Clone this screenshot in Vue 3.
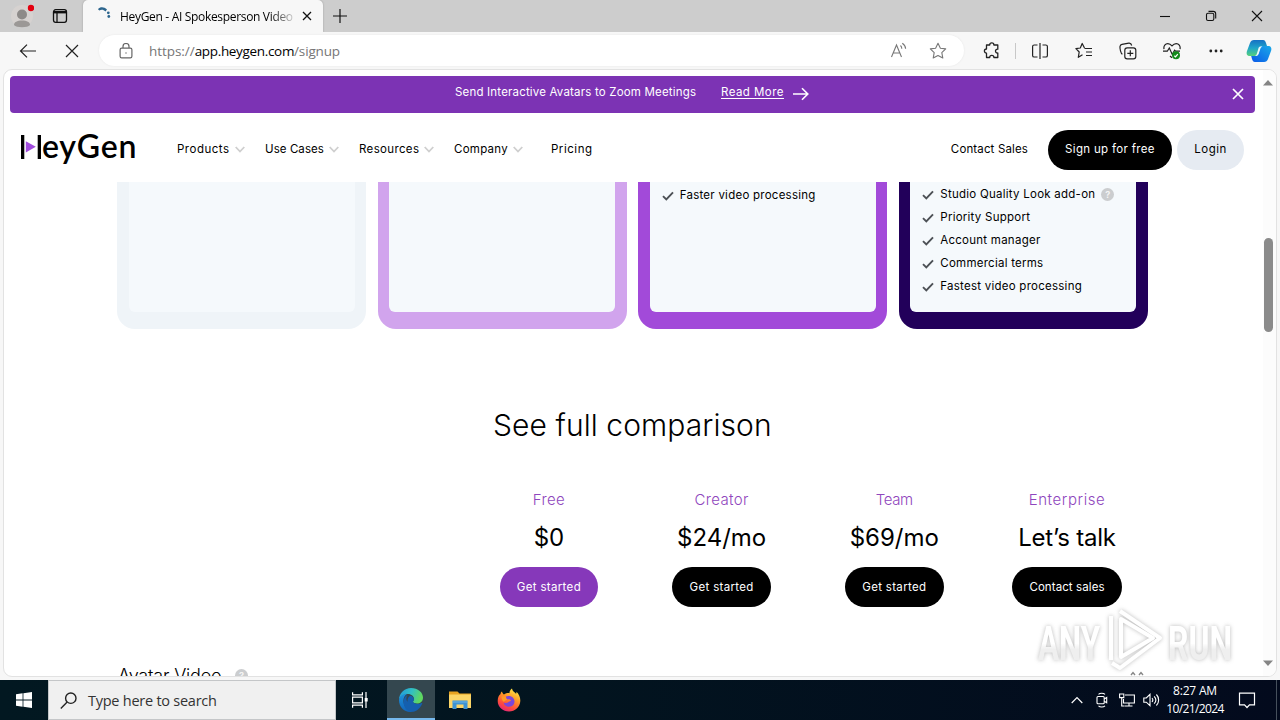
<script setup>
const navLinks = [
  { name: 'Products', spacing: '0.5px', width: 88 },
  { name: 'Use Cases', spacing: '0.08px', width: 94 },
  { name: 'Resources', spacing: '0.35px', width: 95 },
  { name: 'Company', spacing: '0.26px', width: 97 }
]

const cards = [
  { id: 'free', features: [] },
  { id: 'creator', features: [] },
  { id: 'team', features: [{ text: 'Faster video processing' }] },
  {
    id: 'enterprise',
    features: [
      { text: 'Studio Quality Look add-on', hint: true },
      { text: 'Priority Support' },
      { text: 'Account manager' },
      { text: 'Commercial terms' },
      { text: 'Fastest video processing' }
    ]
  }
]

const plans = [
  { name: 'Free', price: '$0', action: 'Get started', spacing: '0.39px', primary: true },
  { name: 'Creator', price: '$24/mo', action: 'Get started', spacing: '0.37px' },
  { name: 'Team', price: '$69/mo', action: 'Get started', spacing: '-0.4px' },
  { name: 'Enterprise', price: 'Let’s talk', action: 'Contact sales', spacing: '0.57px', wide: true }
]
</script>

<template>
  <div class="screen">
    <div class="tab-bar">
      <div class="profile">
        <svg width="24" height="26" viewBox="0 0 24 26">
          <circle cx="12" cy="14" r="11" fill="#d6d2d0" />
          <circle cx="12" cy="12.500" r="5" fill="#8d8a88" />
          <path d="M4 23c0-3 3-4.500 8-4.500s8 1.500 8 4.500c-2 3-14 3-16 0z" fill="#9b9896" />
          <circle cx="21" cy="6" r="3.200" fill="#e3000f" />
        </svg>
      </div>
      <svg class="tab-actions" width="16" height="16" viewBox="0 0 16 16" fill="none" stroke="#111" stroke-width="1.300">
        <rect x="1.500" y="1.700" width="13" height="12.600" rx="2.200" />
        <path d="M1.500 4.200h13" stroke-width="2.400" />
        <path d="M5 4v10" />
      </svg>
      <div class="tab">
        <svg width="14" height="16" viewBox="0 0 14 16" fill="#2d668e">
          <path d="M1 3.200C3 .800 7 .600 10 3.600L8.500 5.400C6.300 3.300 4.200 3.200 2.300 4.600z" />
          <circle cx="11.300" cy="6.800" r="1.400" />
          <circle cx="11.800" cy="10.500" r="1.400" />
        </svg>
        <span class="tab-title">HeyGen - AI Spokesperson Video</span>
        <svg width="10" height="10" viewBox="0 0 10 10" stroke="#111" stroke-width="1.300"><path d="M1 1l8 8M9 1L1 9" /></svg>
      </div>
      <svg class="new-tab" width="14" height="14" viewBox="0 0 14 14" stroke="#111" stroke-width="1.200"><path d="M7 0v14M0 7h14" /></svg>
      <div class="window-buttons">
        <svg width="12" height="12" viewBox="0 0 12 12" stroke="#111" stroke-width="1.100"><path d="M1 6.500h10" /></svg>
        <svg width="12" height="12" viewBox="0 0 12 12" fill="none" stroke="#111" stroke-width="1.100">
          <rect x="1.500" y="3.200" width="7.300" height="7.300" rx="1.500" />
          <path d="M3.500 1.400h4.700c1.500 0 2.500 1 2.500 2.500v4.600" />
        </svg>
        <svg width="12" height="12" viewBox="0 0 12 12" stroke="#111" stroke-width="1.100"><path d="M1 1l10 10M11 1L1 11" /></svg>
      </div>
    </div>

    <div class="toolbar">
      <svg class="back" width="18" height="14" viewBox="0 0 18 14" fill="none" stroke="#222" stroke-width="1.200"><path d="M17 7H1.500M8 .600L1.500 7 8 13.400" /></svg>
      <svg class="stop" width="14" height="14" viewBox="0 0 14 14" stroke="#222" stroke-width="1.200"><path d="M1 1l12 12M13 1L1 13" /></svg>
      <div class="address">
        <svg width="14" height="16" viewBox="0 0 14 16" fill="none" stroke="#666" stroke-width="1.200">
          <rect x="1.100" y="5.200" width="11.800" height="9.600" rx="1.600" />
          <path d="M4 5V3.500a3 3 0 0 1 6 0V5" />
          <circle cx="7" cy="10" r=".700" fill="#666" stroke="none" />
        </svg>
        <div class="url"><span class="scheme">https://</span><span class="host">app.heygen.com</span><span class="path">/signup</span></div>
        <svg class="read" width="18" height="18" viewBox="0 0 18 18" fill="none" stroke="#777" stroke-width="1.100">
          <path d="M1.500 15L6.500 3l5 12M3.300 11h6.500M10.500 3.500c1 1 1.300 2 1.300 3.300M12.300 1.300c1.900 1.300 3.300 3 3.300 5.500" />
        </svg>
        <svg class="star" width="18" height="18" viewBox="0 0 18 18" fill="none" stroke="#777" stroke-width="1.100" stroke-linejoin="round">
          <path d="M9 1.300l2.400 4.900 5.300.700-3.900 3.800 1 5.300L9 13.500 4.200 16l1-5.300L1.300 6.900l5.300-.700z" />
        </svg>
      </div>
      <div class="tools">
        <svg class="ext" width="18" height="18" viewBox="0 0 18 18" fill="none" stroke="#222" stroke-width="1.300" stroke-linejoin="round">
          <path d="M3.500 3h3.200a2.100 2.100 0 0 1 4.200 0h3.900v4.200c-3.100-.400-3.100 4.200 0 3.800V15.500h-3.900a2.100 2.100 0 0 0-4.200 0H3.500v-4.300a2.100 2.100 0 0 1 0-4.200z" />
        </svg>
        <span class="divider"></span>
        <svg width="18" height="18" viewBox="0 0 18 18" fill="none" stroke="#222" stroke-width="1.200">
          <path d="M6.500 3H3.200C2.200 3 1.600 3.600 1.600 4.600v8.800c0 1 .600 1.600 1.600 1.600h3.300M11.500 3h3.300c1 0 1.600.600 1.600 1.600v8.800c0 1-.600 1.600-1.600 1.600h-3.300M9 1v16" />
        </svg>
        <svg width="18" height="18" viewBox="0 0 18 18" fill="none" stroke="#222" stroke-width="1.200" stroke-linejoin="round">
          <path d="M9.500 6L7.200 1.500 5.300 6l-4.400.700 3.300 3.300-.900 5.300 4.200-2.500M9.500 6.500h7.500M11 10h6M11 13.500h6" />
        </svg>
        <svg width="18" height="18" viewBox="0 0 18 18" fill="none" stroke="#222" stroke-width="1.200">
          <rect x="5.800" y="5.800" width="11" height="11" rx="2.400" />
          <path d="M11.300 8.300v6M8.300 11.300h6M3.400 12.300C1.800 11.400.700 6.500 1 4.300 1.300 3 2 2.600 3 2.400l6.800-1.200c1.500-.200 2.500.600 2.900 2.300" />
        </svg>
        <svg width="18" height="18" viewBox="1 0 18 18" fill="none" stroke="#222" stroke-width="1.200">
          <path d="M10 15.800L8 14M2 7.200C1.300 3.500 3.500 1.600 5.800 1.600c2 0 3.100 1 4.200 2.300 1.100-1.300 2.200-2.300 4.200-2.300 2.500 0 4.500 2 3.800 5.600M1 9.200h4.300L7.300 6l3 6.500 2.300-4.300 1 1H18" />
          <circle cx="14" cy="13.300" r="4" fill="#138a1b" stroke="none" />
          <path d="M12.300 13.800l1.200 1 2.300-2.600" stroke="#fff" />
        </svg>
        <svg width="18" height="18" viewBox="0 0 18 18" fill="#222"><circle cx="3.800" cy="9" r="1.400" /><circle cx="9" cy="9" r="1.400" /><circle cx="14.200" cy="9" r="1.400" /></svg>
        <svg class="copilot" width="26" height="24" viewBox="0 0 26 24">
          <defs>
            <linearGradient id="cpA" x1="0" y1="0" x2="0" y2="1"><stop offset="0" stop-color="#1670c4" /><stop offset=".5" stop-color="#1fa5c9" /><stop offset="1" stop-color="#56d17c" /></linearGradient>
            <linearGradient id="cpB" x1="1" y1="0" x2="0" y2="1"><stop offset="0" stop-color="#1aa9e8" /><stop offset="1" stop-color="#0a59e8" /></linearGradient>
          </defs>
          <path d="M8 1h9c2 0 2.500 1.500 3 3l1 3h-4c-2 0-3 1-3.500 3l-1.500 5c-.500 1.500-1.500 2-3 2H4c-3 0-4-2-3-5L4 4c.700-2 2-3 4-3z" fill="url(#cpA)" />
          <path d="M18 23H9c-2 0-2.500-1.500-3-3l-.800-3H9c2 0 3-1 3.500-3L14 9c.500-1.500 1.500-2 3-2h5c3 0 4 2 3 5l-3 8c-.700 2-2 3-4 3z" fill="url(#cpB)" />
          <path d="M14 7.500h2.500c-1.300.500-1.700 1-2.200 2.500l-1.500 4.500c-.500 1.500-1.200 2.200-3 2.500H9c1-.500 1.600-1.300 2-2.800l1.200-4c.300-1.500.700-2.300 1.800-2.700z" fill="#e9f6fb" />
        </svg>
      </div>
    </div>

    <div class="viewport">
      <div class="page">
        <div class="banner">
          <span class="banner-text">Send Interactive Avatars to Zoom Meetings</span>
          <a class="banner-link">Read More</a>
          <svg class="banner-arrow" width="16" height="14" viewBox="0 0 16 14" fill="none" stroke="#fff" stroke-width="1.600"><path d="M0 7h14.500M9 1.200L14.800 7 9 12.800" /></svg>
          <svg class="banner-close" width="12" height="12" viewBox="0 0 12 12" stroke="#fff" stroke-width="1.700"><path d="M1 1l10 10M11 1L1 11" /></svg>
        </div>

        <header class="nav">
          <div class="logo">
            <svg width="20" height="24" viewBox="0 0 20 24">
              <path d="M0 0h3.300v24H0zM16.700 0H20v24h-3.300z" fill="#000" />
              <path d="M4.800 6.300l10 5.500-10 5.700z" fill="#a04bdc" />
            </svg>
            <span>eyGen</span>
          </div>
          <nav class="links">
            <a v-for="link in navLinks" :key="link.name" :style="{ width: link.width + 'px', letterSpacing: link.spacing }">
              {{ link.name }}
              <svg width="10" height="7" viewBox="0 0 10 7" fill="none" stroke="#cfcfcf" stroke-width="1.800"><path d="M.700 1L5 5.500 9.300 1" /></svg>
            </a>
            <a class="pricing">Pricing</a>
          </nav>
          <a class="contact">Contact Sales</a>
          <button class="btn signup">Sign up for free</button>
          <button class="btn login">Login</button>
        </header>

        <section class="cards">
          <div v-for="card in cards" :key="card.id" class="card" :class="card.id">
            <ul class="card-body">
              <li v-for="item in card.features" :key="item.text">
                <svg width="12" height="10" viewBox="0 0 12 10" fill="none" stroke="#4d5156" stroke-width="1.900"><path d="M1 5.200l3.300 3.300L11 1.300" /></svg>
                <span>{{ item.text }}</span>
                <i v-if="item.hint" class="hint">?</i>
              </li>
            </ul>
          </div>
        </section>

        <h2 class="title">See full comparison</h2>

        <section class="plans">
          <div v-for="plan in plans" :key="plan.name" class="plan">
            <div class="plan-name" :style="{ letterSpacing: plan.spacing }">{{ plan.name }}</div>
            <div class="plan-price" :class="{ talk: plan.wide }">{{ plan.price }}</div>
            <button class="btn plan-btn" :class="{ primary: plan.primary, wide: plan.wide }">{{ plan.action }}</button>
          </div>
        </section>

        <div class="group">
          <span>Avatar Video</span>
          <i class="hint">?</i>
          <svg width="14" height="10" viewBox="0 0 14 10" fill="none" stroke="#888" stroke-width="1.400"><path d="M1 5l2-2.500L5 5M9 5l2-2.500L13 5" /></svg>
        </div>
      </div>

      <div class="scrollbar">
        <svg width="10" height="6" viewBox="0 0 10 6" fill="#858585"><path d="M0 5.500L5 0l5 5.500z" /></svg>
        <div class="thumb"></div>
        <svg width="10" height="6" viewBox="0 0 10 6" fill="#858585"><path d="M0 .500h10L5 6z" /></svg>
      </div>
    </div>

    <div class="taskbar">
      <div class="start">
        <svg width="16" height="16" viewBox="0 0 16 16" fill="#fff"><path d="M0 2.200l6.600-.900v6.300H0zM7.400 1.200L16 0v7.600H7.400zM0 8.400h6.600v6.300L0 13.800zM7.400 8.400H16V16l-8.600-1.200z" /></svg>
      </div>
      <div class="search">
        <svg width="17" height="17" viewBox="0 0 17 17" fill="none" stroke="#222" stroke-width="1.400"><circle cx="10.800" cy="6.200" r="5.200" /><path d="M7.200 10L.800 16.400" /></svg>
        <span>Type here to search</span>
      </div>
      <div class="task">
        <svg width="18" height="18" viewBox="0 0 18 18" fill="none" stroke="#fff" stroke-width="1.200">
          <path d="M1.600 1.200v2.600h9.800V1.200M1.600 16.800v-2.600h9.800v2.600M1.600 6.200h9.800v5.600H1.600zM15 1v16" />
          <path d="M13.700 7h3v3.500h-3z" fill="#fff" stroke="none" />
        </svg>
      </div>
      <div class="task active">
        <svg width="24" height="24" viewBox="0 0 24 24">
          <defs>
            <linearGradient id="edA" x1="0" y1="0" x2="1" y2=".3"><stop offset="0" stop-color="#2196d9" /><stop offset=".55" stop-color="#31bfc4" /><stop offset="1" stop-color="#5fd860" /></linearGradient>
            <linearGradient id="edB" x1="0" y1="0" x2="0" y2="1"><stop offset="0" stop-color="#1d92dc" /><stop offset="1" stop-color="#1263b8" /></linearGradient>
          </defs>
          <path d="M0 12C0 5 5.500 0 12 0c7 0 12 4.500 12 9.500 0 4-3 6-6 6-2.700 0-4-.900-4-1.700 0-.700 1.100-1 1.100-2.800C15 8.500 12.500 6 9 6c-4.500 0-8 2.500-9 6z" fill="url(#edA)" />
          <path d="M0 12c.500-4 4-6.500 8.500-6.300-3 1.300-4.500 4.600-4 8.300.700 5 4.800 8.500 9.500 9.700-8 1.500-14-4-14-11.700z" fill="url(#edB)" />
          <path d="M8.500 14c-.300-3 .800-5.500 3-6.300 2.200.500 3.400 2 3.500 3.500-.200 1.500-1 1.800-1 2.600 0 1.500 5 3.500 8.500 1.300.700-.400 1 .100.600.800-2 4.200-6 8.200-11 7.800C7.500 23 4.500 19 4.500 14c0-3 1.500-6 4-7-1.700 2.500-1.500 5 0 7z" fill="#155fae" />
        </svg>
      </div>
      <div class="task">
        <svg width="22" height="20" viewBox="0 0 22 20">
          <path d="M0 1.500h8.500l2 2H22V8H0z" fill="#e7a321" />
          <path d="M0 4.500h22V18H0z" fill="#fbd567" />
          <path d="M3.500 19v-8.500h15V19h-4v-4.500h-7V19z" fill="#3c93d3" />
          <path d="M3.500 12h15" stroke="#6fb6e6" />
        </svg>
      </div>
      <div class="task">
        <svg width="24" height="24" viewBox="0 0 24 24">
          <defs>
            <linearGradient id="ffA" x1=".8" y1="0" x2=".3" y2="1"><stop offset="0" stop-color="#fff04a" /><stop offset=".4" stop-color="#ff9a26" /><stop offset=".75" stop-color="#ff4b3c" /><stop offset="1" stop-color="#e3257a" /></linearGradient>
          </defs>
          <path d="M5 3.500c.300 1.500 1 2.300 2 3C9 5 11.500 5 12.500 5.200 12.300 3.500 13.500 1.500 15 .500c.300 2.500 2.500 3.500 4 5.200.500-.500.500-1.200.400-2C22 6 23.500 9.500 23.300 13 23 19 18 23.500 12 23.500S.700 19 .700 13C.700 9.500 2 7 3.600 6 3.600 5 4 4 5 3.500z" fill="url(#ffA)" />
          <path d="M9 8.500c3-1.500 8.500 0 8.500 5 0 3.500-2.800 5.200-5.500 5.200-3.200 0-5.200-2.200-5.400-4.500 1.500 1.300 3.600 1 5.200-.400.800-.700 1.500-.800 2.200-1.100-.500-1.400-2.200-1.600-3.700-1.400-1-.400-1.400-1.500-1.300-2.800z" fill="#7c46d8" />
          <path d="M4.500 8.500C6 8 8 8.300 9 8.700c-.200 1.500.600 2.400 1.400 2.800-1.500.800-2.500 1-3.400 2.500C5.300 12.700 4.500 11 4.500 8.500z" fill="#ff9a26" />
        </svg>
      </div>
      <div class="tray">
        <svg width="12" height="8" viewBox="0 0 12 8" fill="none" stroke="#fff" stroke-width="1.200"><path d="M.700 7L6 1.700 11.300 7" /></svg>
        <svg class="cam" width="14" height="16" viewBox="0 0 14 16" fill="none" stroke="#fff" stroke-width="1.100">
          <rect x="2" y="4.500" width="7.200" height="7.200" rx="1" />
          <path d="M9.200 7l2.500-1.500v5.300L9.200 9.300M3.500 2.300C5 .800 8.500.800 10 2.300M3.500 13.900c1.500 1.500 5 1.500 6.500 0" />
        </svg>
        <svg width="16" height="14" viewBox="0 0 16 14" fill="none" stroke="#fff" stroke-width="1.100">
          <path d="M6 2h9.400v8H4.500V6M10 10v3M6 13h7.500M.600 1h4.200v3.600H.600zM2.700 4.600V13h3" />
        </svg>
        <svg class="sound" width="17" height="14" viewBox="0 0 17 14" fill="none" stroke="#fff" stroke-width="1.100">
          <path d="M.800 5v4.200h2.500L7 12.700V1.300L3.300 5zM9 5c1 1.200 1 2.800 0 4M11.200 3.300c2 2.200 2 5.200 0 7.400M13.400 1.500c3 3.200 3 7.800 0 11" />
        </svg>
        <div class="clock">
          <span class="time">8:27 AM</span>
          <span class="date">10/21/2024</span>
        </div>
        <svg class="notice" width="18" height="17" viewBox="0 0 18 17" fill="none" stroke="#fff" stroke-width="1.200"><path d="M1.500 1.200h15v11.600h-5L9 15.500l-2.500-2.700h-5z" /></svg>
      </div>
    </div>

    <svg class="watermark" width="210" height="74" viewBox="0 0 210 74">
      <defs>
        <linearGradient id="wm" x1="0" y1="0" x2="0" y2="1"><stop offset=".5" stop-color="#fff" /><stop offset=".6" stop-color="#ececec" /></linearGradient>
      </defs>
      <g fill="url(#wm)">
        <text x="6" y="55" textLength="62" lengthAdjust="spacingAndGlyphs">ANY</text>
        <text x="136" y="55" textLength="64" lengthAdjust="spacingAndGlyphs">RUN</text>
      </g>
      <g fill="none" stroke="#fff" stroke-width="4" stroke-linejoin="round">
        <path d="M79 11v44M89 14v38l32-19z" />
        <path d="M88 6l40 27-40 30-8-5" />
      </g>
    </svg>
  </div>
</template>

<style>
body {
  margin: 0;
  overflow: hidden;
}
</style>

<style scoped>
.screen {
  position: relative;
  display: flex;
  flex-direction: column;
  width: 1280px;
  height: 720px;
  overflow: hidden;
  background: #f7f7f7;
  color: #000;
  font-family: Inter, "Liberation Sans", sans-serif;
  font-size: 11.5px;
}

svg {
  display: block;
  flex: none;
}

/* browser chrome */
.tab-bar {
  display: flex;
  align-items: center;
  height: 32px;
  flex: none;
  background: #cdcdcd;
  font-family: "Open Sans", sans-serif;
  font-size: 12px;
}

.profile {
  margin-left: 10px;
  padding-bottom: 2px;
}

.tab-actions {
  margin-left: 18px;
}

.tab {
  display: flex;
  align-items: center;
  box-sizing: border-box;
  width: 240px;
  height: 32px;
  margin-left: 15px;
  padding-left: 14px;
  border-radius: 5px 5px 0 0;
  background: #f7f7f7;
  box-shadow: 0 0 2px #999;
}

.tab svg:first-child {
  margin-bottom: 5px;
}

.tab-title {
  width: 174px;
  margin: 0 8px 0 9px;
  overflow: hidden;
  white-space: nowrap;
  letter-spacing: -0.32px;
  -webkit-mask-image: linear-gradient(90deg, #000 150px, transparent 178px);
  mask-image: linear-gradient(90deg, #000 150px, transparent 178px);
}

.new-tab {
  margin-left: 10px;
}

.window-buttons {
  display: flex;
  gap: 34px;
  margin-left: auto;
  margin-right: 17px;
}

.toolbar {
  display: flex;
  align-items: center;
  height: 37px;
  flex: none;
  background: #f7f7f7;
}

.back {
  margin-left: 19px;
}

.stop {
  margin-left: 28px;
}

.address {
  display: flex;
  align-items: center;
  box-sizing: border-box;
  width: 865px;
  height: 31px;
  margin-left: 20px;
  padding-left: 20px;
  border-radius: 16px;
  background: #fff;
  box-shadow: 0 0 2px #e4e4e4;
}

.url {
  width: 730px;
  margin-left: 16px;
  color: #767676;
  font: 13.5px/20px "Open Sans", sans-serif;
  white-space: nowrap;
}

.scheme {
  letter-spacing: -0.05px;
}

.host {
  color: #000;
  letter-spacing: -0.33px;
}

.path {
  letter-spacing: -0.15px;
}

.read {
  margin-left: 11px;
}

.star {
  margin-left: 21px;
}

.tools {
  display: flex;
  align-items: center;
  gap: 26px;
  margin-left: 19px;
}

.tools .divider {
  width: 1px;
  height: 16px;
  margin: 0 -11px 0 -12px;
  background: #c8c8c8;
}

.tools .copilot {
  margin-left: -5px;
}

/* page frame */
.viewport {
  display: flex;
  flex: none;
  box-sizing: border-box;
  height: 608px;
  margin: 0 3px;
  border: 1px solid #e2e2e2;
  border-radius: 9px;
  background: #fff;
  overflow: hidden;
}

.page {
  width: 1259px;
  height: 606px;
  overflow: hidden;
}

.scrollbar {
  display: flex;
  flex-direction: column;
  align-items: center;
  box-sizing: border-box;
  width: 13px;
  padding: 10px 3px 10px 0;
  background: #fcfcfc;
}

.thumb {
  width: 9px;
  height: 94px;
  margin: 152px 0 auto;
  border-radius: 5px;
  background: #8b8b8b;
}

.banner {
  display: flex;
  align-items: center;
  box-sizing: border-box;
  height: 37px;
  margin: 6px 8px 0 6px;
  padding: 0 11px 2px 445px;
  border-radius: 4px;
  background: #7c33b4;
  color: #fff;
}

.banner-text {
  width: 266px;
  padding-bottom: 3px;
  letter-spacing: 0.18px;
  white-space: nowrap;
}

.banner-link {
  padding-bottom: 3px;
  letter-spacing: 0.45px;
  text-decoration: underline;
  text-underline-offset: 2px;
}

.banner-arrow {
  margin-left: 9px;
}

.banner-close {
  margin-left: auto;
}

.nav {
  display: flex;
  align-items: center;
  height: 69px;
  padding: 0 19px 0 17px;
}

.logo {
  display: flex;
  align-items: center;
  width: 156px;
}

.logo svg {
  margin-bottom: 2px;
}

.logo span {
  margin: -4px 0 0 1px;
  font: 600 32px/36px Lato, sans-serif;
  letter-spacing: 0.8px;
}

.links {
  display: flex;
  padding-top: 2px;
  line-height: 16px;
}

.contact {
  padding-top: 2px;
}

.links a {
  display: flex;
  align-items: center;
  gap: 5px;
}

.links svg {
  margin-top: 1px;
}

.links .pricing {
  letter-spacing: 0.53px;
}

.contact {
  margin-left: auto;
  letter-spacing: 0.14px;
}

.btn {
  height: 40px;
  padding: 0 0 2px;
  border: 0;
  border-radius: 20px;
  background: #000;
  color: #fff;
  font: 11.5px Inter, sans-serif;
  letter-spacing: 0.33px;
  white-space: nowrap;
}

.signup {
  width: 124px;
  margin: 5px 5px 0 20px;
}

.login {
  width: 67px;
  margin-top: 5px;
  background: #e6ebf2;
  color: #000;
  letter-spacing: 0.5px;
}

.cards {
  display: flex;
  gap: 11.6px;
  height: 147px;
  margin-left: 113px;
}

.card {
  box-sizing: border-box;
  width: 249px;
  padding: 0 11.5px 17px;
  border-radius: 0 0 18px 18px;
}

.card.free {
  background: #eff4f8;
}

.card.creator {
  background: #d1a4ed;
}

.card.team {
  background: #a24ad9;
}

.card.enterprise {
  background: #22005a;
}

.card-body {
  height: 130px;
  margin: 0;
  padding: 0;
  border-radius: 0 0 6px 6px;
  background: #f5f9fc;
  list-style: none;
  overflow: hidden;
}

.card-body li {
  display: flex;
  align-items: center;
  height: 23px;
  padding-left: 12px;
}

.team li {
  padding-top: 1px;
}

.card-body li:first-child {
  margin-top: 1px;
}

.card-body span {
  margin: -1px 0 0 6px;
  letter-spacing: 0.25px;
  white-space: nowrap;
}

.hint {
  width: 13px;
  height: 13px;
  margin-left: 6px;
  border-radius: 50%;
  background: #cbcdcf;
  color: #f4f4f4;
  font: 700 9px/13px Inter, sans-serif;
  text-align: center;
}

.title {
  margin: 76px 0 0 489px;
  font-size: 30px;
  font-weight: 300;
  letter-spacing: 0.08px;
  line-height: 40px;
}

.plans {
  display: flex;
  margin: 45px 0 0 458.6px;
}

.plan {
  display: flex;
  flex-direction: column;
  align-items: center;
  width: 172.7px;
}

.plan-name {
  color: #8f46bd;
  font-size: 15px;
  font-weight: 300;
  line-height: 20px;
}

.plan-price {
  margin-top: 12px;
  font-size: 24px;
  line-height: 32px;
  white-space: nowrap;
}

.plan-price.talk {
  letter-spacing: -0.2px;
}

.plan-btn {
  width: 98.4px;
  margin-top: 13px;
  padding-bottom: 1px;
}

.plan-btn.primary {
  background: #8638ba;
}

.plan-btn.wide {
  width: 110px;
  letter-spacing: 0.09px;
}

.group {
  display: flex;
  align-items: center;
  height: 24px;
  margin: 56px 0 0 114px;
  font-size: 18px;
  font-weight: 300;
}

.group span {
  width: 111px;
  letter-spacing: -0.2px;
  white-space: nowrap;
}

.group svg {
  margin-left: 882px;
}

/* windows taskbar */
.taskbar {
  display: flex;
  flex: none;
  height: 40px;
  margin-top: 3px;
  background: linear-gradient(90deg, #021821, #02141f 45%, #030a1d);
  color: #fff;
  font-family: "Open Sans", sans-serif;
  font-size: 12px;
}

.start,
.task {
  display: flex;
  align-items: center;
  justify-content: center;
  width: 48px;
}

.task {
  margin-right: 1px;
}

.search {
  display: flex;
  align-items: center;
  box-sizing: border-box;
  width: 288px;
  padding-left: 11px;
  border: 1px solid #c4c6c8;
  background: #f0f0f0;
  color: #333;
  font-size: 14.5px;
}

.search span {
  margin-left: 11px;
  letter-spacing: -0.25px;
}

.search + .task {
  margin-right: 3px;
}

.active {
  box-sizing: border-box;
  padding-top: 2px;
  border-bottom: 2px solid #76b9ed;
  background: #34474f;
}

.tray {
  display: flex;
  align-items: center;
  gap: 10px;
  margin-left: auto;
  margin-right: 3px;
  padding-right: 3px;
  border-right: 1px solid #46505c;
}

.tray .cam {
  margin-left: 2px;
}

.tray .sound {
  margin-left: -2px;
}

.clock {
  display: flex;
  flex-direction: column;
  align-items: center;
  width: 60px;
  margin-left: -5px;
  line-height: 18px;
  white-space: nowrap;
}

.time {
  letter-spacing: -0.2px;
}

.date {
  letter-spacing: -0.6px;
}

.notice {
  margin: 0 17px 0 3px;
}

.watermark {
  position: absolute;
  left: 1032px;
  top: 605px;
  filter: drop-shadow(0 0 2px #aaa);
  opacity: 0.8;
  font: 700 49px Roboto, sans-serif;
}
</style>
